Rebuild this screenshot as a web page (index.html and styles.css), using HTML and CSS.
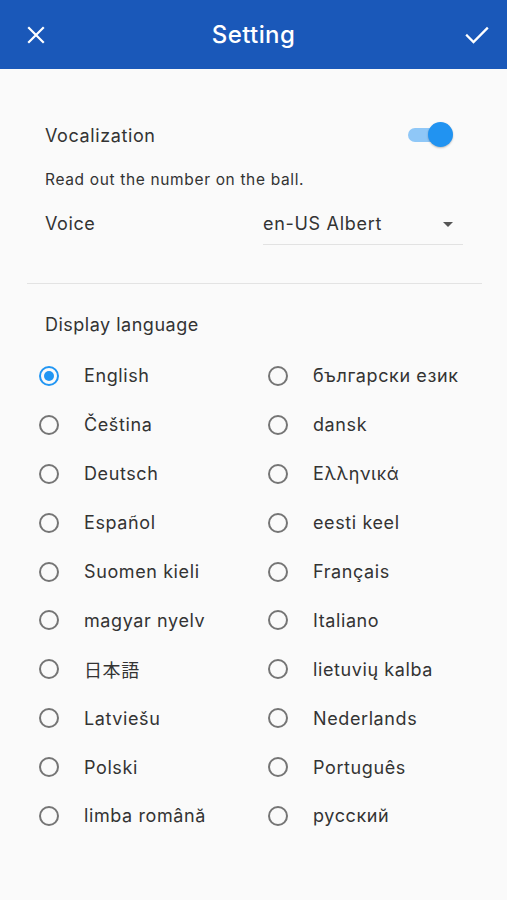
FILE: index.html
```html
<!DOCTYPE html>
<html>
<head>
<meta charset="utf-8">
<link rel="stylesheet" href="styles.css">
</head>
<body>
<header class="appbar">
  <button class="icon-btn close" aria-label="Close">
    <svg width="24" height="24" viewBox="0 0 24 24"><path d="M5 5L19 19M19 5L5 19" stroke="#fff" stroke-width="2.2" stroke-linecap="square" fill="none"/></svg>
  </button>
  <h1 class="title">Setting</h1>
  <button class="icon-btn done" aria-label="Done">
    <svg width="26" height="24" viewBox="0 0 26 24"><path d="M3 12.5L9.5 19L23 5.5" stroke="#fff" stroke-width="2.3" fill="none" stroke-linecap="square"/></svg>
  </button>
</header>
<main class="content">
  <section class="voice-section">
    <div class="row switch-row">
      <span class="label">Vocalization</span>
      <span class="switch"><span class="track"></span><span class="thumb"></span></span>
    </div>
    <p class="hint">Read out the number on the ball.</p>
    <div class="row voice-row">
      <span class="label">Voice</span>
      <div class="select">
        <span class="select-value">en-US Albert</span>
        <span class="caret"></span>
      </div>
    </div>
  </section>
  <hr class="divider">
  <section class="lang-section">
    <h2 class="section-title">Display language</h2>
    <div class="lang-grid">
      <label class="radio checked"><span class="circle"></span><span class="lang">English</span></label>
      <label class="radio"><span class="circle"></span><span class="lang">български език</span></label>
      <label class="radio"><span class="circle"></span><span class="lang">Čeština</span></label>
      <label class="radio"><span class="circle"></span><span class="lang">dansk</span></label>
      <label class="radio"><span class="circle"></span><span class="lang">Deutsch</span></label>
      <label class="radio"><span class="circle"></span><span class="lang">Ελληνικά</span></label>
      <label class="radio"><span class="circle"></span><span class="lang">Español</span></label>
      <label class="radio"><span class="circle"></span><span class="lang">eesti keel</span></label>
      <label class="radio"><span class="circle"></span><span class="lang">Suomen kieli</span></label>
      <label class="radio"><span class="circle"></span><span class="lang">Français</span></label>
      <label class="radio"><span class="circle"></span><span class="lang">magyar nyelv</span></label>
      <label class="radio"><span class="circle"></span><span class="lang">Italiano</span></label>
      <label class="radio"><span class="circle"></span><span class="lang">日本語</span></label>
      <label class="radio"><span class="circle"></span><span class="lang">lietuvių kalba</span></label>
      <label class="radio"><span class="circle"></span><span class="lang">Latviešu</span></label>
      <label class="radio"><span class="circle"></span><span class="lang">Nederlands</span></label>
      <label class="radio"><span class="circle"></span><span class="lang">Polski</span></label>
      <label class="radio"><span class="circle"></span><span class="lang">Português</span></label>
      <label class="radio"><span class="circle"></span><span class="lang">limba română</span></label>
      <label class="radio"><span class="circle"></span><span class="lang">русский</span></label>
    </div>
  </section>
</main>
</body>
</html>
```
FILE: styles.css
```css
* { box-sizing: border-box; }
html, body {
  margin: 0;
  padding: 0;
  background: #fafafa;
  font-family: Inter, "Noto Sans CJK JP", sans-serif;
  color: #333333;
}
body { height: 900px; overflow: hidden; }
.appbar {
  height: 69px;
  background: #1a58b9;
  display: grid;
  grid-template-columns: 1fr auto 1fr;
  align-items: center;
  padding: 0 17px 0 23px;
}
.icon-btn {
  background: none;
  border: 0;
  padding: 0;
  width: 26px;
  height: 24px;
  display: flex;
  align-items: center;
  justify-content: center;
}
.done { justify-self: end; }
.title {
  margin: 0;
  color: #fff;
  font-size: 24px;
  font-weight: 500;
  letter-spacing: 0.4px;
  padding-right: 6px;
}
.content { padding: 0 25px 0 27px; }
.voice-section { padding: 51px 0 0 18px; }
.row {
  display: flex;
  justify-content: space-between;
}
.label { font-size: 18px; letter-spacing: 0.6px; }
.switch-row { height: 30px; align-items: center; padding-right: 29px; }
.switch {
  position: relative;
  width: 47px;
  height: 26px;
  display: block;
}
.track {
  position: absolute;
  left: 2px;
  top: 6px;
  width: 40px;
  height: 14px;
  border-radius: 7px;
  background: #8fc7f7;
}
.thumb {
  position: absolute;
  right: 0;
  top: 0;
  width: 25px;
  height: 25px;
  border-radius: 50%;
  background: #2193f1;
  box-shadow: 0 1px 2px rgba(0,0,0,0.25);
}
.hint {
  margin: 21px 0 0;
  font-size: 15.5px;
  line-height: 18px;
  letter-spacing: 0.65px;
}
.voice-row { margin-top: 21px; align-items: flex-start; padding-right: 19px; }
.voice-row .label { line-height: 28px; }
.select {
  width: 200px;
  height: 35px;
  border-bottom: 1px solid #e2e2e2;
  display: flex;
  justify-content: space-between;
  padding: 0 10px 0 0;
}
.select-value { font-size: 18px; line-height: 28px; letter-spacing: 0.7px; }
.caret {
  margin-top: 12px;
  width: 0;
  height: 0;
  border-left: 5px solid transparent;
  border-right: 5px solid transparent;
  border-top: 5px solid #555;
}
.divider {
  margin: 38px 0 0;
  border: 0;
  border-top: 1px solid #e3e3e3;
}
.lang-section { padding: 29px 0 0 18px; }
.section-title {
  margin: 0;
  font-size: 18px;
  font-weight: 400;
  line-height: 24px;
  letter-spacing: 0.5px;
}
.lang-grid {
  display: grid;
  grid-template-columns: 229px 1fr;
  grid-auto-rows: 48.9px;
  margin: 14.5px 0 0 -6px;
}
.radio {
  display: flex;
  align-items: center;
  gap: 25px;
}
.circle {
  width: 20px;
  height: 20px;
  border: 2px solid #757575;
  border-radius: 50%;
  flex: none;
  position: relative;
}
.radio.checked .circle { border-color: #2196f3; }
.radio.checked .circle::after {
  content: "";
  position: absolute;
  left: 3px;
  top: 3px;
  width: 10px;
  height: 10px;
  border-radius: 50%;
  background: #2196f3;
}
.lang { font-size: 18px; letter-spacing: 0.6px; }
```
